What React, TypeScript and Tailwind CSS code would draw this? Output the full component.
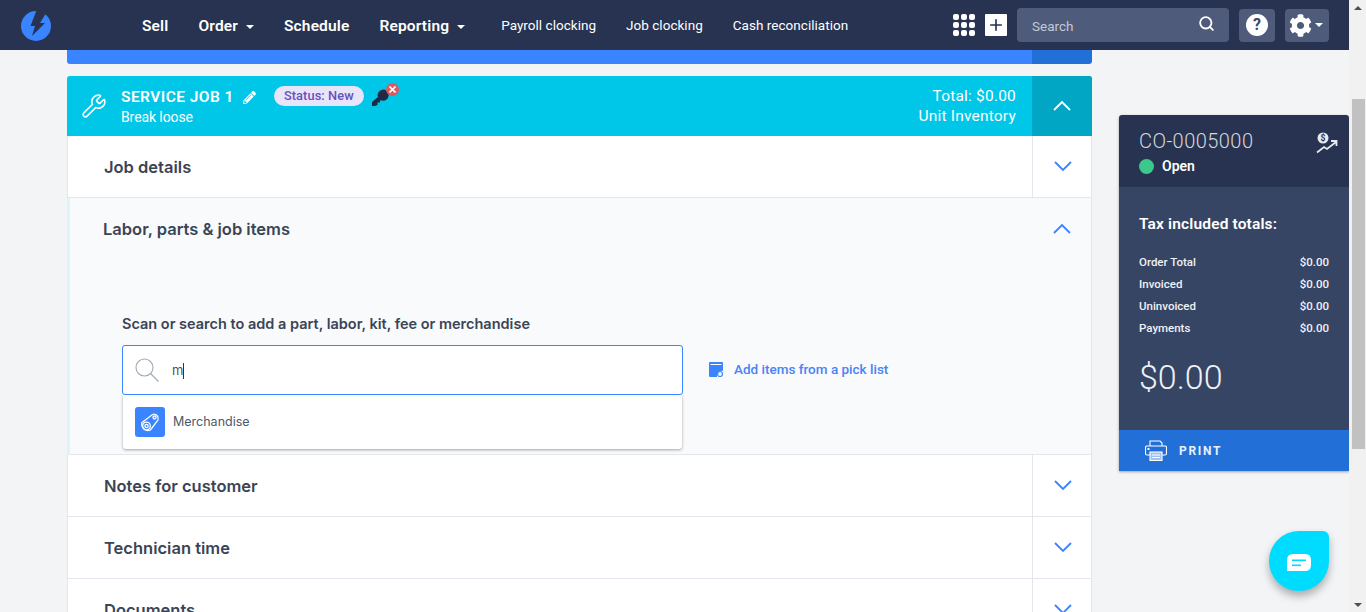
import React from 'react';
import { Search, Wrench, Plus } from 'lucide-react';
import { FaCog, FaPencilAlt } from 'react-icons/fa';

const font = "font-['Roboto',sans-serif]";

function Caret() {
  return <span className="ml-2 w-0 h-0 border-x-[4px] border-x-transparent border-t-[4px] border-t-white" />;
}

function Chevron({ up, className }: { up?: boolean; className: string }) {
  return (
    <svg width="18" height="11" viewBox="0 0 18 11" fill="none" stroke="currentColor" strokeWidth="1.8" className={className}>
      <path d={up ? 'M1 10 L9 2 L17 10' : 'M1 1 L9 9 L17 1'} />
    </svg>
  );
}

function NavLink({ label, caret }: { label: string; caret?: boolean }) {
  return (
    <a className="flex items-center text-[15.5px] font-semibold text-white whitespace-nowrap tracking-[0.15px]">
      {label}
      {caret && <Caret />}
    </a>
  );
}

function CollapsedRow({ label }: { label: string }) {
  return (
    <div className="flex h-[62px] border-b border-[#e3e6ec] bg-white">
      <div className="flex-1 flex items-center pl-[36px] pt-[1px] font-['Inter',sans-serif] text-[16.5px] font-semibold text-[#3b4456]">{label}</div>
      <div className="w-[59px] pl-[2px] flex items-center justify-center border-l border-[#e3e6ec]">
        <Chevron className="text-[#3a84ff]" />
      </div>
    </div>
  );
}

function TotalRow({ label }: { label: string }) {
  return (
    <div className="flex justify-between h-[22px] items-center text-[11.5px] font-medium text-[#eef1f6]">
      <span>{label}</span>
      <span>$0.00</span>
    </div>
  );
}

export default function App() {
  return (
    <div className={`${font} relative flex h-[612px] w-full overflow-hidden bg-[#f3f4f6]`}>
      <div className="flex-1 min-w-0 flex flex-col">
        {/* Top nav */}
        <header className="h-[50px] shrink-0 bg-[#273350] flex items-center">
          <div className="w-[142px] pl-[21px] pt-[1px]">
            <svg width="30" height="31" viewBox="0 0 30 31">
              <circle cx="15" cy="16" r="15" fill="#3a84ff" />
              <path d="M16 -1 L27 0 L19 13 L24 13 L11 26 L14 16 L9.5 16 Z" fill="#273350" />
            </svg>
          </div>
          <div className="flex items-center gap-[30px] pt-[3px]">
            <NavLink label="Sell" />
            <NavLink label="Order" caret />
            <NavLink label="Schedule" />
            <NavLink label="Reporting" caret />
          </div>
          <div className="flex items-center gap-[30px] ml-[36px] text-[13.5px] text-white tracking-[0.03px]">
            <a>Payroll clocking</a>
            <a>Job clocking</a>
            <a>Cash reconciliation</a>
          </div>
          <div className="ml-auto flex items-center mr-[20px]">
            <div className="grid grid-cols-3 gap-[2px] w-[22px]">
              {[0, 1, 2, 3, 4, 5, 6, 7, 8].map(i => (
                <span key={i} className="w-[6px] h-[6px] rounded-[2px] bg-white" />
              ))}
            </div>
            <div className="ml-[10px] w-[22px] h-[22px] bg-white rounded-[1px] flex items-center justify-center">
              <Plus size={18} strokeWidth={2.2} className="text-[#273350]" />
            </div>
            <div className="ml-[10px] w-[212px] h-[34px] rounded-[4px] bg-[#4e5b7a] flex items-center pl-[15px] pr-[14px] text-[13.5px] text-[#c3c9d6]">
              <span className="flex-1 pt-[2px]">Search</span>
              <Search size={17} strokeWidth={2.6} className="text-white -mt-1" />
            </div>
            <div className="ml-[10px] w-[36px] h-[33px] rounded-[4px] bg-[#4e5b7a] flex items-center justify-center">
              <span className="w-[22px] h-[22px] rounded-full bg-white text-[#3d4966] text-[16px] font-bold flex items-center justify-center">?</span>
            </div>
            <div className="ml-[10px] w-[44px] h-[33px] rounded-[4px] bg-[#4e5b7a] flex items-center pl-[4px]">
              <FaCog size={23} className="text-white" />
              <span className="ml-[3px] w-0 h-0 border-x-[4px] border-x-transparent border-t-[4px] border-t-white" />
            </div>
          </div>
        </header>

        <div className="flex-1 flex pl-[67px] items-start min-h-0">
          {/* Job column */}
          <div className="w-[1025px] shrink-0">
            <div className="flex h-[14px] rounded-b-[3px] overflow-hidden">
              <div className="flex-1 bg-[#3a84ff]" />
              <div className="w-[60px] bg-[#226fd8]" />
            </div>

            <div className="mt-[12px] border-x border-[#e3e6ec] rounded-t-[3px]">
              {/* Service job header */}
              <div className="-mx-px flex h-[60px] bg-[#00c6e8] text-white rounded-t-[3px] overflow-hidden">
                <div className="w-[54px] flex items-center justify-center">
                  <Wrench size={26} strokeWidth={1.5} />
                </div>
                <div className="flex-1 flex">
                  <div className="pt-[11px]">
                    <div className="flex items-center text-[15.5px] font-semibold tracking-[0.45px] leading-[20px]">
                      SERVICE JOB 1
                      <FaPencilAlt size={13} className="ml-[9px]" />
                    </div>
                    <div className="text-[14px] leading-[20px] tracking-[-0.1px]">Break loose</div>
                  </div>
                  <div className="ml-[18px] mt-[10px] h-[20px] rounded-full bg-[#e8e4fb] px-[10px] flex items-center text-[12.8px] font-medium text-[#6a50b8] tracking-[0.1px]">
                    Status: New
                  </div>
                  <div className="relative ml-[7px] mt-[7px] w-[28px] h-[26px]">
                    <svg width="20" height="20" viewBox="0 0 20 20" className="absolute left-0 top-[4px]">
                      <path d="M1 19 L1 15 L7 10 A5.5 5.5 0 1 1 11 13.5 L9 13.5 L9 15.5 L6.5 15.5 L6.5 18 L4 19 Z" fill="#1f2a44" />
                    </svg>
                    <span className="absolute left-[15px] top-0 w-[13px] h-[13px] rounded-full bg-[#e6555c] flex items-center justify-center">
                      <svg width="7" height="7" viewBox="0 0 7 7" stroke="#fff" strokeWidth="1.6"><path d="M0.5 0.5 L6.5 6.5 M6.5 0.5 L0.5 6.5" /></svg>
                    </span>
                  </div>
                </div>
                <div className="pr-[16px] pt-[10px] text-right text-[15.5px] leading-[20px] tracking-[0.2px]">
                  <div>Total: $0.00</div>
                  <div>Unit Inventory</div>
                </div>
                <div className="w-[60px] bg-[#00a6c4] flex items-center justify-center">
                  <Chevron up className="text-white -mt-[2px]" />
                </div>
              </div>

              <CollapsedRow label="Job details" />

              {/* Labor section */}
              <div className="h-[257px] bg-[#f8fafc] border-b border-[#e3e6ec] border-l-[3px] border-l-[#dff4f8] -ml-px relative">
                <div className="flex h-[62px]">
                  <div className="flex-1 flex items-center pl-[33px] font-['Inter',sans-serif] text-[16.5px] font-semibold text-[#3b4456]">Labor, parts &amp; job items</div>
                  <div className="w-[59px] flex items-center justify-center">
                    <Chevron up className="text-[#3a84ff] -mt-[2px]" />
                  </div>
                </div>
                <div className="pl-[52px] pt-[54px]">
                  <div className="font-['Inter',sans-serif] text-[14.5px] font-semibold leading-[20px] text-[#3b4456]">Scan or search to add a part, labor, kit, fee or merchandise</div>
                  <div className="flex items-center mt-[11px]">
                    <div className="w-[561px] h-[50px] rounded-[3px] border border-[#3a84ff] bg-white flex items-center pl-[11px]">
                      <svg width="26" height="26" viewBox="0 0 26 26" fill="none" stroke="#a0a8b8" strokeWidth="1.1">
                        <circle cx="10.5" cy="10.5" r="8.5" />
                        <path d="M16.5 16.5 L24.5 24.5" />
                      </svg>
                      <span className="ml-[12px] pt-[2px] font-['Inter',sans-serif] text-[13px] text-[#4b5568]">m</span>
                      <span className="w-px h-[16px] mt-[2px] bg-[#273350]" />
                    </div>
                    <a className="ml-[26px] -mt-[2px] flex items-center text-[13.5px] font-medium text-[#4a82f7]">
                      <svg width="14" height="15" viewBox="0 0 14 15" className="mr-[11px]">
                        <path d="M0 1 Q0 0 1 0 H13 Q14 0 14 1 V9 A5 5 0 0 0 8 15 H1 Q0 15 0 14 Z" fill="#3a84ff" />
                        <rect x="1.5" y="2" width="11" height="1" fill="#fff" />
                        <circle cx="11" cy="12" r="2.5" fill="none" stroke="#3a84ff" strokeWidth="1.2" />
                      </svg>
                      Add items from a pick list
                    </a>
                  </div>
                  <div className="w-[559px] ml-px h-[54px] bg-white rounded-b-[3px] shadow-[0_1px_3px_rgba(0,0,0,0.35)] flex items-center pl-[12px]">
                    <span className="w-[30px] h-[30px] rounded-[3px] bg-[#3a84ff] flex items-center justify-center">
                      <svg width="24" height="24" viewBox="0 0 24 24" fill="none" stroke="#fff" strokeWidth="1.3">
                        <path d="M4 12.5 L14.5 4.5 A4.3 4.3 0 0 1 20 10 L12.5 20 A6.3 6.3 0 0 1 4 12.5 Z" />
                        <circle cx="8.5" cy="16" r="3.8" />
                        <circle cx="8.5" cy="16" r="1.6" />
                        <circle cx="16.5" cy="7.5" r="1.5" />
                      </svg>
                    </span>
                    <span className="ml-[8px] pt-[1px] font-['Inter',sans-serif] text-[12.5px] text-[#4f5868]">Merchandise</span>
                  </div>
                </div>
              </div>

              <CollapsedRow label="Notes for customer" />
              <CollapsedRow label="Technician time" />
              <CollapsedRow label="Documents" />
            </div>
          </div>

          {/* Totals sidebar */}
          <aside className="ml-[27px] mt-[65px] w-[230px] shrink-0 rounded-t-[3px] overflow-hidden shadow-[0_1px_3px_rgba(0,0,0,0.35)]">
            <div className="h-[72px] bg-[#273350] relative pl-[20px] pt-[14px]">
              <div className="text-[20px] font-light leading-[24px] text-[#d5d8df] tracking-[0.45px]">CO-0005000</div>
              <div className="flex items-center mt-[3px]">
                <span className="w-[15px] h-[15px] rounded-full bg-[#3cc88a]" />
                <span className="ml-[8px] text-[14px] font-semibold text-white">Open</span>
              </div>
              <svg width="22" height="22" viewBox="0 0 22 22" fill="none" className="absolute right-[11px] top-[17px]">
                <circle cx="7" cy="6" r="5.5" fill="#e8eaf0" />
                <text x="7" y="9" textAnchor="middle" fontSize="8.5" fontWeight="700" fill="#273350">$</text>
                <path d="M1 20.5 L8 15 L11 17 L20 10 M15 9 H20.5 V14" stroke="#e8eaf0" strokeWidth="1.8" />
              </svg>
            </div>
            <div className="h-[243px] bg-[#364564] px-[20px] pt-[25px]">
              <div className="text-[15.5px] font-semibold leading-[24px] text-white tracking-[0.15px]">Tax included totals:</div>
              <div className="mt-[16px]">
                <TotalRow label="Order Total" />
                <TotalRow label="Invoiced" />
                <TotalRow label="Uninvoiced" />
                <TotalRow label="Payments" />
              </div>
              <div className="mt-[17px] text-[34px] font-light leading-[40px] text-[#eef1f6]">$0.00</div>
            </div>
            <div className="h-[41px] bg-[#226fd8] flex items-center pl-[26px]">
              <svg width="22" height="21" viewBox="0 0 22 21" fill="none" stroke="#fff" strokeWidth="1.1">
                <path d="M5 6 V1 H15 L17 3 V6" />
                <path d="M5 15 H2 Q0.5 15 0.5 13.5 V7.5 Q0.5 6 2 6 H20 Q21.5 6 21.5 7.5 V13.5 Q21.5 15 20 15 H17" />
                <rect x="2.5" y="8" width="2" height="2" fill="#fff" stroke="none" />
                <rect x="5" y="12" width="12" height="8.5" fill="#9fc0f0" />
                <path d="M7 15 H15 M7 17.5 H15" />
              </svg>
              <span className="ml-[12px] text-[12px] font-bold tracking-[1.7px] text-[#e8f0fc]">PRINT</span>
            </div>
          </aside>
        </div>
      </div>

      {/* Scrollbar */}
      <div className="w-[17px] shrink-0 bg-[#f1f1f1] flex flex-col items-center">
        <span className="mt-[6px] w-0 h-0 border-x-[4px] border-x-transparent border-b-[4px] border-b-[#505050]" />
        <div className="mt-[89px] w-[13px] h-[350px] ml-[2px] bg-[#c1c1c1]" />
        <span className="mt-auto mb-[5px] w-0 h-0 border-x-[4px] border-x-transparent border-t-[4px] border-t-[#505050]" />
      </div>

      {/* Chat bubble */}
      <div className="absolute left-[1269px] top-[531px] w-[60px] h-[60px] bg-[#00dcff] rounded-[30px] rounded-tr-[6px] shadow-[0_5px_8px_rgba(0,0,0,0.3)] flex items-center justify-center">
        <svg width="24" height="18" viewBox="0 0 24 18" className="mt-[3px]">
          <path d="M6 0 H18 Q24 0 24 6 V11 Q24 17 18 17 H0 V6 Q0 0 6 0 Z" fill="#fff" />
          <rect x="5" y="5.5" width="14" height="1.6" fill="#00dcff" />
          <rect x="5" y="10.5" width="9" height="1.6" fill="#00dcff" />
        </svg>
      </div>
    </div>
  );
}
